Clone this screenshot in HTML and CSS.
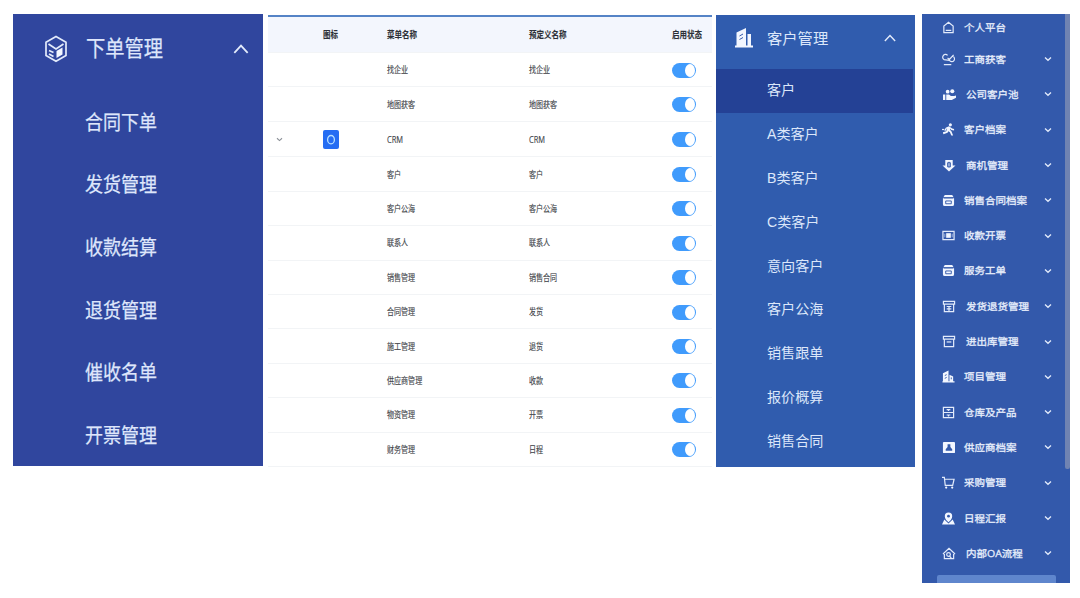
FILE: index.html
```html
<!DOCTYPE html>
<html lang="zh-CN">
<head>
	<meta charset="UTF-8">
	<title>菜单管理</title>
	<link rel="stylesheet" href="styles.css">
</head>
<body>
<svg class="defs">
	<symbol id="down" viewBox="0 0 8 6"><path d="M1 1.5 L4 4.3 L7 1.5"/></symbol>
	<symbol id="up" viewBox="0 0 14 9"><path d="M1 8 L7 1.5 L13 8"/></symbol>
	<symbol id="printer" viewBox="0 0 14 14"><path class="f" d="M3 1h8l1.500 2.500h-11z M1 4.500h12v6.500a2 2 0 0 1-2 2H3a2 2 0 0 1-2-2z"/><path class="d" d="M2 4.200h10 M4 7.500h6v3H4z"/></symbol>
	<symbol id="box" viewBox="0 0 14 14"><path d="M1 1.500h12v3H1z M2 4.500v8h10v-8"/><path d="M4.500 7.500h5"/></symbol>
</svg>
<div class="board">
	<div class="order">
		<div class="head">
			<svg class="cube" viewBox="0 0 24 28"><path d="M12 1.500 L22 7.200 V20.500 L12 26.300 L2 20.500 V7.200 Z"/><path d="M4.500 9 L12 14 L19.500 9 M5 15.500 L9.500 17.500 M5 19 L9.500 21.500"/><path class="f" d="M12.500 16 L18.500 12.500 V19.500 L12.500 23 Z"/></svg>
			<span>下单管理</span>
			<svg class="up"><use href="#up"/></svg>
		</div>
		<ul>
			<li><span>合同下单</span></li>
			<li><span>发货管理</span></li>
			<li><span>收款结算</span></li>
			<li><span>退货管理</span></li>
			<li><span>催收名单</span></li>
			<li><span>开票管理</span></li>
		</ul>
	</div>

	<div class="table">
		<div class="row th"><i></i><i><span>图标</span></i><span>菜单名称</span><span>预定义名称</span><span>启用状态</span></div>
		<div class="row"><i></i><i></i><span>找企业</span><span>找企业</span><b class="switch"></b></div>
		<div class="row"><i></i><i></i><span>地图获客</span><span>地图获客</span><b class="switch"></b></div>
		<div class="row crm"><i><svg class="down"><use href="#down"/></svg></i><i class="tag"><svg viewBox="0 0 16 19"><ellipse cx="8" cy="9.700" rx="3.400" ry="4.200"/></svg></i><span>CRM</span><span>CRM</span><b class="switch"></b></div>
		<div class="row"><i></i><i></i><span>客户</span><span>客户</span><b class="switch"></b></div>
		<div class="row"><i></i><i></i><span>客户公海</span><span>客户公海</span><b class="switch"></b></div>
		<div class="row"><i></i><i></i><span>联系人</span><span>联系人</span><b class="switch"></b></div>
		<div class="row"><i></i><i></i><span>销售管理</span><span>销售合同</span><b class="switch"></b></div>
		<div class="row"><i></i><i></i><span>合同管理</span><span>发货</span><b class="switch"></b></div>
		<div class="row"><i></i><i></i><span>施工管理</span><span>退货</span><b class="switch"></b></div>
		<div class="row"><i></i><i></i><span>供应商管理</span><span>收款</span><b class="switch"></b></div>
		<div class="row"><i></i><i></i><span>物资管理</span><span>开票</span><b class="switch"></b></div>
		<div class="row"><i></i><i></i><span>财务管理</span><span>日程</span><b class="switch"></b></div>
	</div>

	<div class="customer">
		<div class="head">
			<svg class="building" viewBox="0 0 18 20"><path class="f" d="M0 17.500h1.500V4.500L11 0v17.500h1.500V6H16v11.500h2V19.500H0z"/><path class="d" d="M4.500 8l3.500-2 M4.500 11.500l3.500-2"/></svg>
			<span>客户管理</span>
			<svg class="up"><use href="#up"/></svg>
		</div>
		<ul>
			<li class="current">客户</li>
			<li>A类客户</li>
			<li>B类客户</li>
			<li>C类客户</li>
			<li>意向客户</li>
			<li>客户公海</li>
			<li>销售跟单</li>
			<li>报价概算</li>
			<li>销售合同</li>
		</ul>
	</div>

	<div class="side">
		<ul>
			<li class="first"><svg viewBox="0 0 14 14"><path d="M2 12.500V5.500L7 1.500l5 4v7z M4 10h6"/></svg><span>个人平台</span></li>
			<li><svg viewBox="0 0 14 14"><path d="M6 2.500a3 3 0 1 0-2 5l4 .5a3 3 0 1 0 3.500-4.500 M6 5.500l2 1.500 4.500-5 M2 12.500h8"/></svg><span>工商获客</span><svg class="down"><use href="#down"/></svg></li>
			<li class="wide"><svg viewBox="0 0 14 14"><circle class="f" cx="5" cy="4" r="2"/><circle class="f" cx="10" cy="3.500" r="2.200"/><path class="f" d="M0 7h2.500v6H0z M3.500 7h3l2 1.500H12L14 8v2.500L9.500 13h-6z"/></svg><span>公司客户池</span><svg class="down"><use href="#down"/></svg></li>
			<li><svg viewBox="0 0 14 14"><circle class="f" cx="9" cy="2" r="1.700"/><path class="f" d="M7.500 3.500L4 5 2.500 8l1.200.5L5 6.300 5.500 6 4.500 9 1 10l.5 2 4.500-1.500.8-1.500L8.500 10l1.500 3.500h2L10 8.500 8.700 7.500 9 6l1 1.500 3 .5V6.500L11 6z"/><path d="M0 7h2.500"/></svg><span>客户档案</span><svg class="down"><use href="#down"/></svg></li>
			<li class="mid"><svg viewBox="0 0 14 14"><path class="f" d="M3 1h8v6h3l-7 6.500L0 7h3z"/><path class="d" d="M5.500 4h3v4.500h-3z M7 3v6"/></svg><span>商机管理</span><svg class="down"><use href="#down"/></svg></li>
			<li><svg><use href="#printer"/></svg><span>销售合同档案</span><svg class="down"><use href="#down"/></svg></li>
			<li><svg viewBox="0 0 14 14"><path d="M1 2.500h12v9H1z"/><path class="f" d="M4.500 4.500h5v5h-5z"/><path d="M3 5v4 M11 5v4" opacity=".5"/></svg><span>收款开票</span><svg class="down"><use href="#down"/></svg></li>
			<li><svg><use href="#printer"/></svg><span>服务工单</span><svg class="down"><use href="#down"/></svg></li>
			<li class="mid"><svg viewBox="0 0 14 14"><path d="M1 1.500h12v3H1z M2 4.500v8h10v-8 M4.500 7h5 M4.500 9.500h5 M7 7v5"/></svg><span>发货退货管理</span><svg class="down"><use href="#down"/></svg></li>
			<li class="mid"><svg><use href="#box"/></svg><span>进出库管理</span><svg class="down"><use href="#down"/></svg></li>
			<li><svg viewBox="0 0 14 14"><path class="f" d="M1 12V3.500L7 .5V12h1V5l4 2v5h1.500v1.500H.5V12z"/><path class="d" d="M3 6l2-1 M3 9l2-1 M10 8v2"/></svg><span>项目管理</span><svg class="down"><use href="#down"/></svg></li>
			<li><svg viewBox="0 0 14 14"><path d="M1.500 1.500h11v11h-11z M1.500 7h11 M5 4h4 M5 9.700h4 M7 4v1.500 M7 9.700v1.500"/></svg><span>仓库及产品</span><svg class="down"><use href="#down"/></svg></li>
			<li><svg viewBox="0 0 14 14"><rect class="f" x="1" y="1" width="13" height="12" rx="1"/><path class="k" d="M6 3.500h3v3l2 2.500v1.500H4V9l2-2.500z"/></svg><span>供应商档案</span><svg class="down"><use href="#down"/></svg></li>
			<li><svg viewBox="0 0 14 14"><path d="M0 1.500h2.500l1 8.500h8l1.500-6.500H3"/><circle class="f" cx="4.500" cy="12.500" r="1.200"/><circle class="f" cx="11" cy="12.500" r="1.200"/></svg><span>采购管理</span><svg class="down"><use href="#down"/></svg></li>
			<li><svg viewBox="0 0 14 14"><path class="f" d="M3 4.500a4 4 0 0 1 8 0Q11 7 9.500 8.500L7 11 4.500 8.500Q3 7 3 4.500z M2.500 8L7 12.500 11.500 8l2.500 5.500H0z"/><circle class="k" cx="7" cy="4.500" r="1.500"/></svg><span>日程汇报</span><svg class="down"><use href="#down"/></svg></li>
			<li class="mid"><svg viewBox="0 0 14 14"><path d="M.5 7.500L7 1.500l6.500 6 M2 7.500v5h10v-5 M9.500 12L7.500 9.700"/><circle cx="6.500" cy="8" r="2"/></svg><span>内部OA流程</span><svg class="down"><use href="#down"/></svg></li>
		</ul>
		<div class="next"></div>
		<div class="scroll"></div>
	</div>
</div>
</body>
</html>
```
FILE: styles.css
```css
* {
	margin: 0;
	padding: 0;
	box-sizing: border-box;
}

body {
	background: #fff;
	font-family: "Liberation Sans", "Noto Sans CJK SC", sans-serif;
}

ul {
	list-style: none;
}

i, b {
	font-style: normal;
	font-weight: normal;
}

svg {
	display: block;
	flex: none;
	fill: none;
	stroke: #e3ebfb;
	stroke-width: 1.3;
}

svg .f {
	fill: #f2f6ff;
	stroke: none;
}

svg .d {
	stroke: #3359ab;
	stroke-width: 1;
}

svg .k {
	fill: #3359ab;
	stroke: none;
}

.defs {
	position: absolute;
	width: 0;
	height: 0;
}

.board {
	display: flex;
	align-items: flex-start;
	width: 1080px;
	height: 598px;
	padding: 14px 0 0 13px;
	overflow: hidden;
}

.head, .row, li {
	display: flex;
	align-items: center;
	white-space: nowrap;
}

.head span, .row span, li span {
	display: block;
	transform-origin: 0 50%;
}

/* order menu */
.order {
	width: 250px;
	height: 452px;
	background: #30469e;
	color: #dfe6fb;
	-webkit-text-stroke: .25px #dfe6fb;
}

.order .head {
	height: 77px;
	padding: 0 14px 8px 31px;
}

.cube {
	width: 24px;
	height: 28px;
	stroke-width: 1.7;
	margin-right: 18px;
}

.order .head span {
	padding-bottom: 5px;
	font-size: 22px;
	transform: scaleX(.875);
}

.order .up {
	width: 16px;
	height: 10px;
	margin-left: auto;
	stroke-width: 1.6;
}

.order li {
	height: 62.6px;
	padding: 0 0 3px 72px;
}

.order li span {
	font-size: 20.5px;
	transform: scaleX(.878);
}

/* menu table */
.table {
	width: 444px;
	margin: 1px 0 0 5px;
	border-top: 2px solid #5583c6;
}

.row {
	display: grid;
	grid-template-columns: 55px 64px 142px 143px 40px;
	height: 34.4px;
	border-bottom: 1px solid #f2f4f6;
	color: #44474c;
	font-family: "Open Sans", "Noto Sans CJK SC", sans-serif;
	font-size: 8.8px;
}

.row span {
	-webkit-text-stroke: .15px #44474c;
	transform: scaleX(.8);
}

.th {
	height: 36px;
	background: #f3f6fd;
	color: #2c2f36;
	font-size: 9.4px;
}

.th span {
	padding-bottom: 2px;
	font-weight: bold;
}

.crm {
	height: 35.6px;
}

.crm span {
	font-size: 9.4px;
}

.crm .down {
	width: 7px;
	height: 5px;
	margin-left: 8px;
	stroke: #8b9097;
}

.tag {
	width: 16px;
	height: 19px;
	border-radius: 2px;
	background: #256df3;
}

.tag svg {
	width: 16px;
	height: 19px;
	stroke: #b8e0ff;
}

.switch {
	width: 24px;
	height: 15px;
	margin-top: 1px;
	padding: 1px;
	border-radius: 8px;
	background: #409bfc;
}

.switch::after {
	content: "";
	display: block;
	width: 10px;
	height: 13px;
	margin-left: auto;
	border-radius: 50%;
	background: #fff;
}

/* customer menu */
.customer {
	width: 199px;
	height: 452px;
	margin: 1px 0 0 4px;
	background: #305cae;
	color: #dce7fa;
}

.customer .head {
	height: 54px;
	padding: 0 19px 8px 19px;
	font-size: 15.3px;
}

.customer .head span {
	padding-bottom: 3px;
}

.building {
	width: 18px;
	height: 20px;
	margin-right: 14px;
}

.customer .up {
	width: 12px;
	height: 8px;
	margin-left: auto;
	stroke-width: 1.6;
}

.customer li {
	height: 43.9px;
	padding: 0 0 4px 51px;
	font-size: 14.1px;
}

.customer li.current {
	margin-right: 2px;
	background: #244195;
}

/* full side menu */
.side {
	position: relative;
	width: 148px;
	height: 569px;
	margin-left: 7px;
	background: #3359ab;
	color: #e8effc;
	font-family: "Open Sans", "Noto Sans CJK SC", sans-serif;
}

.side li {
	height: 35.3px;
	padding: 0 18px 0 20px;
	font-size: 10.5px;
}

.side li.first {
	height: 27.5px;
	padding-bottom: 1px;
}

.side li > svg:first-child {
	width: 13px;
	height: 13px;
	margin-right: 9px;
}

.side li.mid > svg:first-child {
	width: 14px;
	margin-right: 10px;
}

.side li.wide > svg:first-child {
	width: 15px;
	margin-right: 9px;
}

.side li span {
	padding-bottom: 2px;
	-webkit-text-stroke: .3px #e8effc;
	transform: scaleY(.92);
}

.side .down {
	width: 8px;
	height: 6px;
	margin-left: auto;
}

.next {
	height: 8px;
	margin: 4px 14px 0 15px;
	border-radius: 2px 2px 0 0;
	background: #5f86cd;
}

.scroll {
	position: absolute;
	top: 0;
	right: 0;
	width: 5px;
	height: 455px;
	border-radius: 0 0 2px 2px;
	background: #7083b2;
}
```
